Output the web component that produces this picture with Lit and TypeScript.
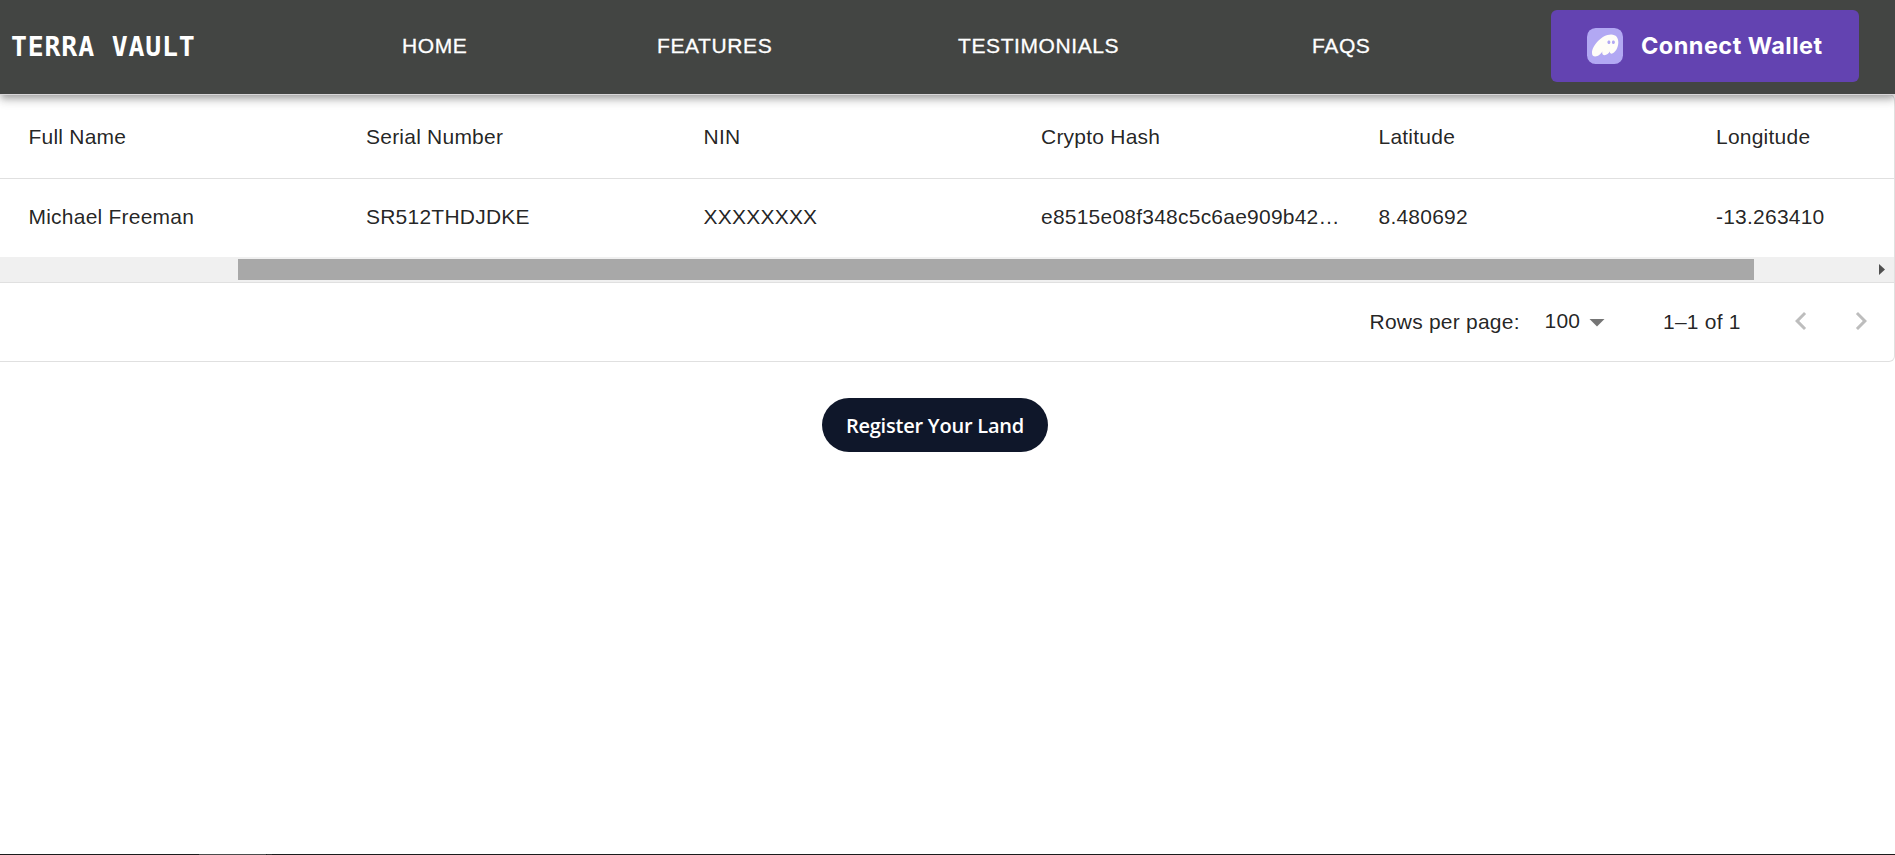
import { LitElement, html, css } from "lit";
import { customElement } from "lit/decorators.js";

const NAV = ["HOME", "FEATURES", "TESTIMONIALS", "FAQS"];
const COLUMNS = ["Full Name", "Serial Number", "NIN", "Crypto Hash", "Latitude", "Longitude"];
const ROW = ["Michael Freeman", "SR512THDJDKE", "XXXXXXXX", "e8515e08f348c5c6ae909b42d71f03", "8.480692", "-13.263410"];

@customElement("nav-header")
class NavHeader extends LitElement {
  static styles = css`
    :host { display: block; position: relative; z-index: 1; margin-bottom: -1px; }
    .bar { display: flex; align-items: center; box-sizing: border-box; height: 95px; padding: 0 36px 2px 11px; border-bottom: 1px solid #d8d6d8; background: #434543; color: #fff;
      box-shadow: 0 3px 6px -1.5px rgba(0,0,0,.2), 0 6px 7.5px rgba(0,0,0,.14), 0 1.5px 15px rgba(0,0,0,.12); }
    .brand { width: 391px; padding-top: 2px; font: 700 26.5px/36px "DejaVu Sans Mono", monospace; letter-spacing: .83px; white-space: pre; }
    .links { display: flex; flex: 1; padding-bottom: 1px; font: 21px/30px "Liberation Sans", Arial, sans-serif; letter-spacing: .6px; -webkit-text-stroke: .3px #fff; }
    .link:nth-child(1) { width: 255px; }
    .link:nth-child(2) { width: 301px; }
    .link:nth-child(3) { width: 354px; }
    .wallet { display: flex; align-items: center; gap: 18px; box-sizing: border-box; width: 308px; height: 72px; padding: 0 0 0 36px; border: 0; border-radius: 6px; background: #6343b1; color: #fff;
      font: 700 23.5px/36px Inter, sans-serif; letter-spacing: .46px; white-space: nowrap; }
    .wallet svg { width: 36px; height: 36px; flex: none; }
  `;
  render() {
    return html`<header class="bar">
      <div class="brand">TERRA VAULT</div>
      <nav class="links">${NAV.map((n) => html`<span class="link">${n}</span>`)}</nav>
      <button class="wallet">
        <svg viewBox="0 0 108 108"><rect width="108" height="108" rx="26" fill="#B2A8F3"/><path fill-rule="evenodd" clip-rule="evenodd" fill="#FFFDF8" d="M46.5267 69.9229C42.0054 76.8509 34.4292 85.6182 24.348 85.6182C19.5824 85.6182 15 83.6563 15 75.1342C15 53.4305 44.6326 19.8327 72.1268 19.8327C87.768 19.8327 94 30.6846 94 43.0079C94 58.8258 83.7355 76.9122 73.5321 76.9122C70.2939 76.9122 68.7053 75.1342 68.7053 72.314C68.7053 71.5783 68.8275 70.7812 69.0719 69.9229C65.5893 75.8699 58.8685 81.3878 52.5754 81.3878C47.993 81.3878 45.6713 78.5063 45.6713 74.4598C45.6713 72.9884 45.9768 71.4556 46.5267 69.9229ZM83.6761 42.5794C83.6761 46.1704 81.5575 47.9658 79.1875 47.9658C76.7816 47.9658 74.6989 46.1704 74.6989 42.5794C74.6989 38.9885 76.7816 37.1931 79.1875 37.1931C81.5575 37.1931 83.6761 38.9885 83.6761 42.5794ZM70.2103 42.5795C70.2103 46.1704 68.0916 47.9658 65.7216 47.9658C63.3157 47.9658 61.233 46.1704 61.233 42.5795C61.233 38.9885 63.3157 37.1931 65.7216 37.1931C68.0916 37.1931 70.2103 38.9885 70.2103 42.5795Z"/></svg>
        <span>Connect Wallet</span>
      </button>
    </header>`;
  }
}

@customElement("data-table")
class DataTable extends LitElement {
  static styles = css`
    :host { display: block; }
    .grid { box-sizing: border-box; height: 268px; border: 1px solid #e0e0e0; border-left: 0; border-radius: 0 6px 6px 0;
      color: rgba(0,0,0,.87); font: 21px/30px "Liberation Sans", Arial, sans-serif; letter-spacing: .225px; overflow: hidden; }
    .row { display: grid; grid-template-columns: repeat(6, 337.5px); box-sizing: border-box; padding: 0 0 2px 13.5px; height: 78px; align-items: center; width: 2040px; }
    .head { height: 84px; padding-bottom: 0; border-bottom: 1px solid #e0e0e0; }
    .cell { padding: 0 15px; overflow: hidden; text-overflow: ellipsis; white-space: nowrap; }
    .track { display: flex; align-items: center; height: 25px; background: #f0f0f0; }
    .thumb { width: 1516px; height: 21px; margin-left: 238px; background: #a8a8a8; }
    .arrow { width: 6px; height: 11px; margin-left: 125px; fill: #505050; }
    .footer { display: flex; align-items: center; height: 77px; border-top: 1px solid #e0e0e0; padding-left: 1369.5px; }
    .size { margin-left: 26px; width: 44px; padding-bottom: 2px; }
    .size, .label, .range { white-space: nowrap; }
    .label { width: 149px; }
    .range { width: 120px; margin-left: 48.5px; }
    .icon { width: 36px; height: 36px; }
    .chev { fill: rgba(0,0,0,.26); padding-bottom: 1px; }
    .next { margin-left: 24px; }
    .drop { fill: rgba(0,0,0,.54); margin-left: -10px; }
  `;
  render() {
    return html`<section class="grid">
      <div class="row head">${COLUMNS.map((c) => html`<div class="cell">${c}</div>`)}</div>
      <div class="row">${ROW.map((c) => html`<div class="cell">${c}</div>`)}</div>
      <div class="track"><div class="thumb"></div><svg class="arrow" viewBox="0 0 6 11"><path d="M0 0l6 5.5L0 11z"/></svg></div>
      <div class="footer">
        <span class="label">Rows per page:</span><span class="size">100</span>
        <svg class="icon drop" viewBox="0 0 24 24"><path d="m7 10 5 5 5-5z"/></svg>
        <span class="range">1–1 of 1</span>
        <svg class="icon chev" viewBox="0 0 24 24"><path d="M15.41 16.59L10.83 12l4.58-4.59L14 6l-6 6 6 6z"/></svg>
        <svg class="icon chev next" viewBox="0 0 24 24"><path d="M8.59 16.59L13.17 12 8.59 7.41 10 6l6 6-6 6z"/></svg>
      </div>
    </section>`;
  }
}

@customElement("app-root")
class AppRoot extends LitElement {
  static styles = css`
    :host { display: flex; flex-direction: column; height: 855px; background: #fff; overflow: hidden; }
    .register { display: flex; align-items: center; justify-content: center; width: 226px; height: 54px; margin: 36px 0 0 822px; border: 0; border-radius: 27px; padding: 2px 0 0; background: #0f172a; color: #fff;
      font: 600 20px/30px "Open Sans", sans-serif; letter-spacing: -.22px; white-space: nowrap; }
    .edge { display: flex; height: 1px; margin-top: auto; background: #1c1c1c; }
    .tab { width: 67px; margin-left: 199px; background: #4c4c4c; }
    .mark { width: 5px; margin-left: 1px; background: #333; }
  `;
  render() {
    return html`<nav-header></nav-header>
      <data-table></data-table>
      <button class="register">Register Your Land</button>
      <div class="edge"><div class="tab"></div><div class="mark"></div></div>`;
  }
}
